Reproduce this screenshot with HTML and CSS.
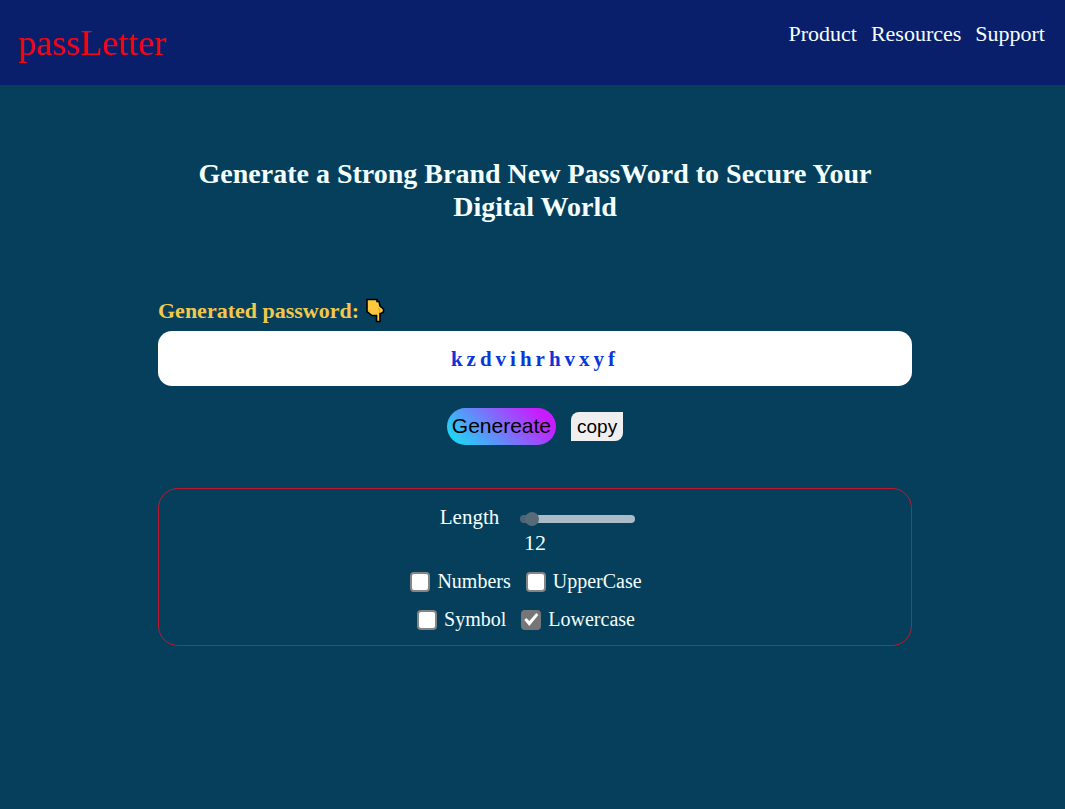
FILE: index.html
```html
<!DOCTYPE html>
<html lang="en">
<head>
<meta charset="utf-8">
<meta name="viewport" content="width=device-width, initial-scale=1">
<title>passLetter</title>
<link rel="stylesheet" href="styles.css">
</head>
<body>
<header class="topbar">
  <a class="brand" href="#">passLetter</a>
  <nav class="nav">
    <a href="#">Product</a>
    <a href="#">Resources</a>
    <a href="#">Support</a>
  </nav>
</header>
<main class="page">
  <h1 class="title">Generate a Strong Brand New PassWord to Secure Your Digital World</h1>
  <div class="label-row">
    <label for="password">Generated password:</label>
    <svg class="hand" viewBox="0 0 20 26" aria-hidden="true">
      <path d="M2 1.5H12V3.5H14L15 8L18.5 11V14L16 15.5H15V23.5H11.5V17.5H7L2 13.5Z" fill="#ffc83d" stroke="#000" stroke-width="1.6" stroke-linejoin="miter"/>
      <path d="M4 13.5L5 12M13.5 10L15 14" fill="none" stroke="#d99a20" stroke-width="1"/>
    </svg>
  </div>
  <input class="password" id="password" type="text" value="kzdvihrhvxyf" readonly>
  <div class="actions">
    <button class="generate" type="button">Genereate</button>
    <button class="copy" type="button">copy</button>
  </div>
  <section class="options">
    <div class="length-row">
      <label for="length">Length</label>
      <input class="slider" id="length" type="range" min="8" max="100" value="12">
    </div>
    <output class="count" for="length">12</output>
    <div class="checks">
      <label class="check"><input type="checkbox">Numbers</label>
      <label class="check"><input type="checkbox">UpperCase</label>
    </div>
    <div class="checks">
      <label class="check"><input type="checkbox">Symbol</label>
      <label class="check"><input type="checkbox" checked>Lowercase</label>
    </div>
  </section>
</main>
</body>
</html>
```
FILE: styles.css
```css
* { box-sizing: border-box; }

body {
  margin: 0;
  min-height: 100vh;
  background: #053f5c;
  color: #f4ffff;
  font-family: "Liberation Serif", "Times New Roman", serif;
}

.topbar {
  display: flex;
  justify-content: space-between;
  align-items: flex-start;
  min-height: 85px;
  padding: 21px 20px 20px 18px;
  background: #091f6c;
}

.brand {
  color: #f00514;
  font-size: 36px;
  line-height: 44px;
  text-decoration: none;
}

.nav { display: flex; gap: 14px; }

.nav a {
  color: inherit;
  font-size: 22px;
  line-height: 26px;
  text-decoration: none;
}

.page {
  display: flex;
  flex-direction: column;
  padding: 72px 153px 40px 158px;
}

.title {
  margin: 0 0 74px;
  padding: 0 20px;
  font-size: 28px;
  line-height: 33px;
  text-align: center;
}

.label-row {
  display: flex;
  align-items: center;
  gap: 6px;
  height: 28px;
  margin-bottom: 6px;
  color: #f1c84b;
  font-size: 22px;
  font-weight: bold;
}

.hand { width: 20px; height: 26px; }

.password {
  width: 100%;
  height: 55px;
  padding: 2px 0 0;
  border: 0;
  border-radius: 14px;
  background: #fff;
  color: #0b36d8;
  font: bold 21px "Liberation Serif", "Times New Roman", serif;
  letter-spacing: 4px;
  text-align: center;
}

.actions {
  display: flex;
  justify-content: center;
  align-items: center;
  gap: 15px;
  margin: 22px 0 43px;
}

.generate,
.copy {
  border: 0;
  color: #000;
  font-family: "Liberation Sans", Arial, sans-serif;
}

.generate {
  height: 37px;
  padding: 0 5px 2px;
  border-radius: 19px;
  background: linear-gradient(45deg, #0fe8f5, #c81cff 85%);
  font-size: 21px;
}

.copy {
  height: 29px;
  padding: 0 6px;
  border-radius: 8px 0;
  background: #efefef;
  font-size: 19px;
}

.options {
  display: flex;
  flex-direction: column;
  align-items: center;
  padding: 15px 0 13px;
  border: 1px solid #c0182a;
  border-radius: 20px;
}

.length-row {
  display: flex;
  align-items: center;
  gap: 21px;
  margin-left: 5px;
  font-size: 21px;
  line-height: 26px;
}

.slider {
  width: 115px;
  height: 16px;
  margin: 4px 0 0;
  appearance: none;
  background: transparent;
}

.slider::-webkit-slider-runnable-track {
  height: 8px;
  border-radius: 4px;
  background: linear-gradient(90deg, #4f6472 10%, #a9bcc7 10%);
}

.slider::-webkit-slider-thumb {
  appearance: none;
  width: 14px;
  height: 14px;
  margin-top: -3px;
  border-radius: 50%;
  background: #566a78;
}

.count { font-size: 22px; line-height: 26px; }

.checks {
  display: flex;
  gap: 15px;
  margin-top: 12px;
  padding-right: 18px;
}

.check {
  display: flex;
  align-items: center;
  gap: 7px;
  font-size: 20px;
  line-height: 26px;
}

.check input {
  display: grid;
  place-items: center;
  width: 20px;
  height: 20px;
  margin: 2px 0 0;
  appearance: none;
  border: 2px solid #858585;
  border-radius: 4px;
  background: #fff;
}

.check input:checked { background: #767676; border-color: #767676; }

.check input:checked::before {
  content: "";
  width: 16px;
  height: 16px;
  background: #fff;
  clip-path: polygon(1px 8px, 3px 6px, 6px 9px, 13px 1px, 15px 3px, 6px 14px);
}
```
